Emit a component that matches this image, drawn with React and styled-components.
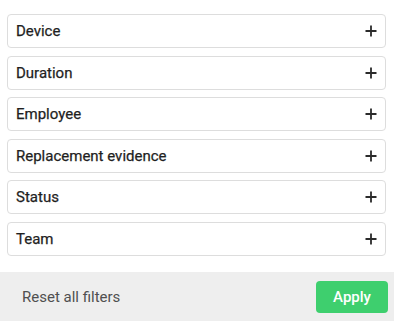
import React from "react";
import styled, { createGlobalStyle } from "styled-components";

const Global = createGlobalStyle`
  html, body { margin: 0; padding: 0; background: #fff; }
  body { font-family: Roboto, "Liberation Sans", sans-serif; }
`;

const Panel = styled.div`
  width: 394px;
  height: 321px;
  display: flex;
  flex-direction: column;
`;

const List = styled.div`
  display: flex;
  flex-direction: column;
  gap: 7.6px;
  padding: 14px 8px 0 7px;
  flex: 1;
`;

const Row = styled.button`
  box-sizing: border-box;
  height: 34px;
  display: flex;
  align-items: center;
  justify-content: space-between;
  padding: 0 8px 0 8px;
  border: 1px solid #dddddd;
  border-radius: 4px;
  background: #fff;
  font-family: inherit;
  font-size: 15px;
  font-weight: 400;
  color: #1f1f1f;
  -webkit-text-stroke: 0.25px #1f1f1f;
  cursor: pointer;
  text-align: left;
`;

const Plus = styled.svg`
  width: 12px;
  height: 12px;
  flex: none;
`;

const Footer = styled.div`
  height: 49px;
  background: #eeeeee;
  display: flex;
  align-items: center;
  justify-content: space-between;
  padding: 0 6px 0 22px;
`;

const Reset = styled.button`
  border: none;
  background: none;
  padding: 0;
  font-family: inherit;
  font-size: 15px;
  color: #505050;
  cursor: pointer;
`;

const Apply = styled.button`
  width: 72px;
  height: 32px;
  border: none;
  border-radius: 4px;
  background: #3ecf6e;
  color: #fff;
  font-family: inherit;
  font-size: 15px;
  font-weight: 500;
  cursor: pointer;
`;

const items = ["Device", "Duration", "Employee", "Replacement evidence", "Status", "Team"];

export default function App() {
  return (
    <>
      <Global />
      <Panel>
        <List>
          {items.map((t) => (
            <Row key={t}>
              {t}
              <Plus viewBox="0 0 12 12">
                <path d="M6 0.5v11M0.5 6h11" stroke="#2b2b2b" strokeWidth="1.8" fill="none" />
              </Plus>
            </Row>
          ))}
        </List>
        <Footer>
          <Reset>Reset all filters</Reset>
          <Apply>Apply</Apply>
        </Footer>
      </Panel>
    </>
  );
}
